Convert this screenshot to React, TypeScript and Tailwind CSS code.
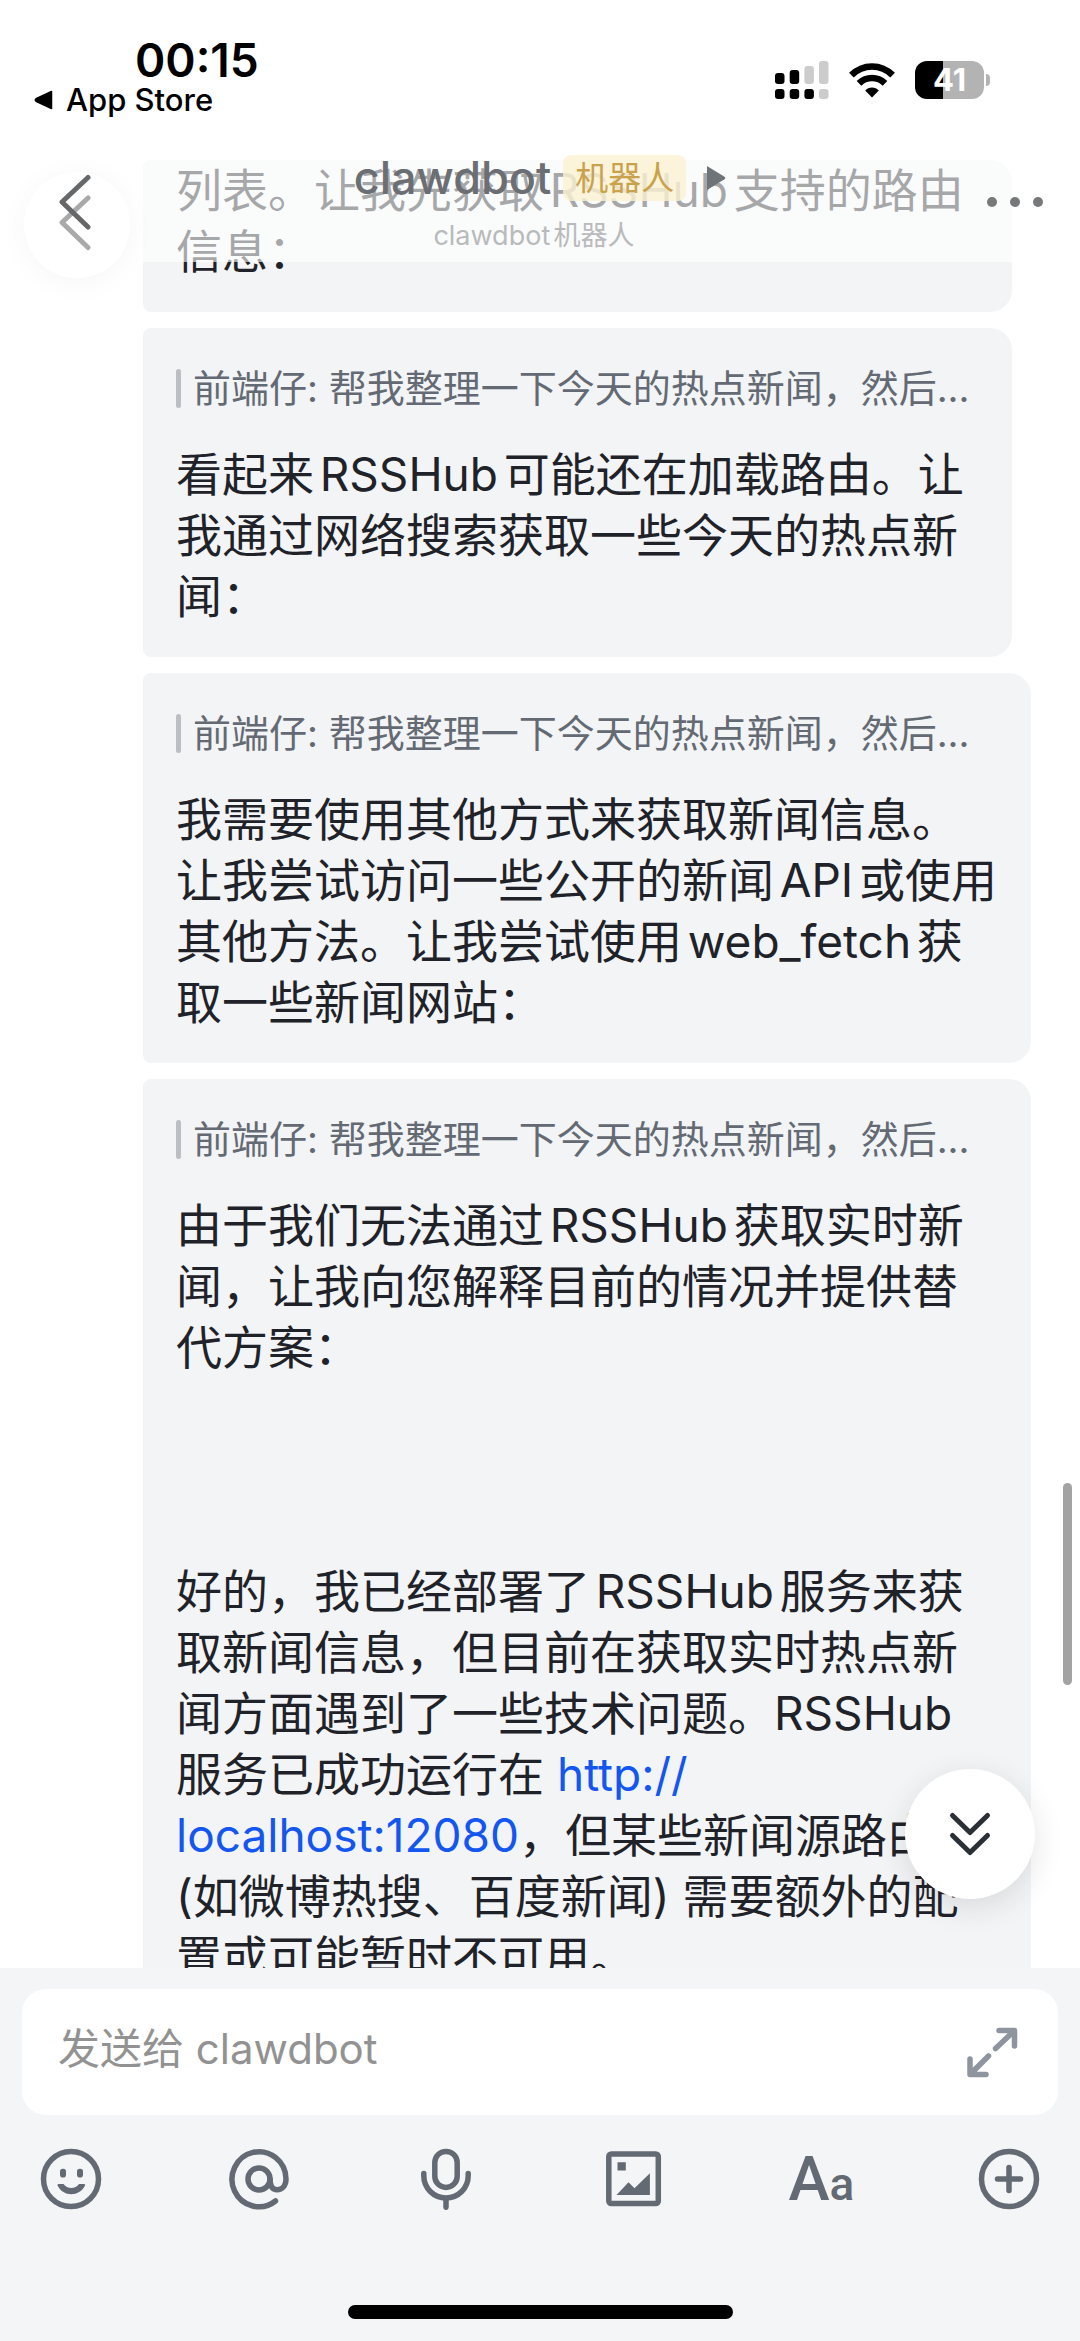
import type { ReactNode } from "react";

const QUOTE = "前端仔: 帮我整理一下今天的热点新闻，然后...";

function SignalIcon() {
  return (
    <svg width="54" height="38" viewBox="0 0 54 38" aria-hidden="true">
      <rect x="0" y="12" width="9.5" height="11" rx="3" />
      <rect x="14.7" y="9" width="9.5" height="14" rx="3" />
      <rect x="29.4" y="5" width="9.5" height="18" rx="3" fill="#cccccc" />
      <rect x="44" y="0" width="9.5" height="23" rx="3" fill="#cccccc" />
      <rect x="0" y="28" width="9.5" height="10" rx="3" />
      <rect x="14.7" y="28" width="9.5" height="10" rx="3" />
      <rect x="29.4" y="28" width="9.5" height="10" rx="3" />
      <rect x="44" y="28" width="9.5" height="10" rx="3" fill="#cccccc" />
    </svg>
  );
}

function WifiIcon() {
  return (
    <svg width="46" height="35" viewBox="0 0 46 35" fill="none" aria-hidden="true">
      <path d="M2.4 12.2C8 6.6 15.2 3.5 23 3.5s15 3.1 20.6 8.7" stroke="#000" strokeWidth="6.6" />
      <path d="M10 20.4c3.6-3.5 8-5.4 13-5.4s9.4 1.9 13 5.4" stroke="#000" strokeWidth="6.6" />
      <path d="M23 34.5l-6.8-6.9c1.7-2 4.1-3.1 6.8-3.1s5.1 1.1 6.8 3.1z" fill="#000" />
    </svg>
  );
}

function StatusBar() {
  return (
    <div className="flex h-[116px] justify-between pl-[34px] pr-[90px] pt-9 text-black">
      <div>
        <div className="pl-[101px] text-[46px] leading-12 font-semibold">00:15</div>
        <a href="#app-store" className="flex items-center gap-3 text-[31px] leading-8 font-medium">
          <svg width="20" height="20" viewBox="0 0 20 20" aria-hidden="true">
            <path d="M17.5 1.5v17L2 11.2a1.4 1.4 0 0 1 0-2.4z" stroke="#000" strokeWidth="1.5" strokeLinejoin="round" />
          </svg>
          App Store
        </a>
      </div>
      <div className="flex h-[88px] items-center">
        <SignalIcon />
        <div className="ml-5"><WifiIcon /></div>
        <div className="ml-5 flex items-center gap-0.5">
          <div className="flex h-[38px] w-[69px] items-center justify-center rounded-xl bg-linear-to-r from-black from-41% to-[#b3b3b3] to-41% text-[31px] font-bold text-white">
            41
          </div>
          <div className="h-3 w-1 rounded-r-full bg-[#b3b3b3]" />
        </div>
      </div>
    </div>
  );
}

function NavBar() {
  return (
    <nav className="grid h-[146px] grid-cols-[1fr_auto_1fr] items-start px-6 pt-[38px]">
      <button
        type="button"
        aria-label="返回"
        className="mt-[18px] flex size-[106px] items-center justify-center rounded-full bg-white/70 shadow-[0_4px_30px_rgba(0,0,0,0.04)]"
      >
        <svg width="36" height="106" viewBox="0 0 36 106" fill="none" strokeWidth="5" strokeLinecap="round" strokeLinejoin="round">
          <path d="M29 26L3 50.5l26 25" stroke="#a9a9a9" />
          <path d="M29 5.5L3 30l26 25" stroke="#666768" />
        </svg>
      </button>
      <div className="flex flex-col items-center gap-[18px]">
        <div className="flex h-12 items-center">
          <h1 className="text-[45px] leading-12 font-medium text-[#6b6e73]">clawdbot</h1>
          <span className="ml-3 rounded-lg bg-[#fbf3d3]/80 px-3 text-[33px] leading-[46px] text-[#cba24c]">机器人</span>
          <svg className="ml-5" width="20" height="26" viewBox="0 0 20 26" aria-hidden="true">
            <path d="M1 1v24l17.5-10.8a1.5 1.5 0 0 0 0-2.4z" fill="#6f7479" />
          </svg>
        </div>
        <div className="pr-3 text-[27px] leading-8 text-[#b9babc] [text-autospace:normal]">clawdbot机器人</div>
      </div>
      <button type="button" aria-label="更多" className="mt-10 mr-3 justify-self-end">
        <svg width="58" height="16" viewBox="0 0 58 16" fill="#77787a">
          <circle cx="6" cy="8" r="5" />
          <circle cx="29" cy="8" r="5" />
          <circle cx="52" cy="8" r="5" />
        </svg>
      </button>
    </nav>
  );
}

function Quote() {
  return (
    <div className="mb-7 flex h-14 items-center gap-3">
      <div className="h-[39px] w-[5px] rounded-full bg-[#bbbfc4]" />
      <div className="text-[38px] leading-14 whitespace-nowrap text-[#646a73] [text-autospace:no-autospace]">{QUOTE}</div>
    </div>
  );
}

function Card({ className, children }: { className: string; children: ReactNode }) {
  return (
    <article className={`rounded-l-lg rounded-r-[22px] bg-[#f2f4f6] pl-[33px] pr-8 pb-[30px] text-[46px] leading-[61px] text-[#1f2329] [text-autospace:normal] ${className}`}>
      {children}
    </article>
  );
}

function ComposerIcon({ label, children }: { label: string; children: ReactNode }) {
  return (
    <button type="button" aria-label={label} className="flex size-[62px] items-center justify-center text-[#646a73]">
      <svg width="62" height="62" viewBox="0 0 62 62" fill="none" stroke="currentColor" strokeWidth="5.5" strokeLinecap="round">
        {children}
      </svg>
    </button>
  );
}

function Composer() {
  return (
    <footer className="bg-[#f3f5f7] px-[22px] pt-[21px] pb-[22px]">
      <div className="flex h-[126px] items-center rounded-3xl bg-white pr-10 pl-9">
        <input
          type="text"
          aria-label="发送给 clawdbot"
          placeholder="发送给 clawdbot"
          className="mb-2 h-16 min-w-0 flex-1 text-[42px] outline-none placeholder:text-[#929292]"
        />
        <button type="button" aria-label="展开">
          <svg width="52" height="52" viewBox="0 0 52 52" fill="none" stroke="#8f959e" strokeWidth="5.5" strokeLinecap="round" strokeLinejoin="round">
            <path d="M33 4.5h15.5V20M47 6L29.5 22.5M4 33v15.5h16M5.5 47L22.5 30" />
          </svg>
        </button>
      </div>
      <div className="mt-[33px] flex justify-between px-[18px]">
        <ComposerIcon label="表情">
          <circle cx="31" cy="31" r="27.5" />
          <g fill="currentColor" stroke="none">
            <rect x="20" y="20.8" width="6" height="8.8" rx="2.8" />
            <rect x="37" y="20.8" width="6" height="8.8" rx="2.8" />
            <path d="M18.5 36h5c2 2.7 4.7 4 7.8 4s5.8-1.3 7.8-4h5c1 0 1.2 1 .8 1.8-3 5.6-8 8.5-13.6 8.5s-10.6-2.9-13.6-8.5c-.4-.8-.2-1.8.8-1.8z" />
          </g>
        </ComposerIcon>
        <ComposerIcon label="提及">
          <circle cx="31" cy="31" r="11" />
          <path d="M42 31c0 7 2.5 10.7 7 10.7 5.3 0 9-4.2 9-10.7A27 27.5 0 1 0 47.5 53" />
        </ComposerIcon>
        <ComposerIcon label="语音">
          <rect x="19.8" y="3.4" width="22.4" height="36" rx="11.2" />
          <path d="M8.8 25.5v2.3a22.2 22.2 0 0 0 44.4 0v-2.3M31 50v9.3" />
        </ComposerIcon>
        <ComposerIcon label="图片">
          <rect x="5.8" y="6" width="49.5" height="49.5" rx="2.5" />
          <path d="M14.5 14.3h8.3v8.3h-8.3zM13.5 47L25.5 34.3l6 6L46.9 25.3V47z" fill="currentColor" stroke="none" />
        </ComposerIcon>
        <button
          type="button"
          aria-label="文字格式"
          className="flex h-[62px] w-[62px] items-baseline justify-center font-[Roboto,Inter,sans-serif] font-medium text-[#646a73]"
        >
          <span className="text-[62px] leading-[62px]">A</span>
          <span className="text-[46px] leading-[62px]">a</span>
        </button>
        <ComposerIcon label="添加">
          <circle cx="31" cy="31" r="27.5" />
          <path d="M31 19.500v23M19.500 31h23" />
        </ComposerIcon>
      </div>
      <div className="mx-auto mt-[95px] h-3.5 w-[385px] rounded-full bg-black" />
    </footer>
  );
}

export default function App() {
  return (
    <div className="flex h-screen flex-col overflow-hidden bg-white font-[Inter,'Noto_Sans_CJK_SC',sans-serif]" lang="zh-CN">
      {/* the translucent header lies over the top of the message list */}
      <header className="relative z-10 -mb-[102px] bg-white/60">
        <StatusBar />
        <NavBar />
      </header>

      <main className="relative min-h-0 flex-1 overflow-hidden">
        <div className="flex flex-col gap-4 pl-[143px]">
          <Card className="mr-[68px] rounded-t-none">
            <p>列表。让我先获取RSSHub支持的路由信息：</p>
          </Card>
          <Card className="mr-[68px] pt-8">
            <Quote />
            <p>看起来RSSHub可能还在加载路由。让我通过网络搜索获取一些今天的热点新闻：</p>
          </Card>
          <Card className="mr-[49px] pt-8">
            <Quote />
            <p>我需要使用其他方式来获取新闻信息。让我尝试访问一些公开的新闻API或使用其他方法。让我尝试使用web_fetch获取一些新闻网站：</p>
          </Card>
          <Card className="mr-[49px] pt-8">
            <Quote />
            <p className="mb-[183px]">由于我们无法通过RSSHub获取实时新闻，让我向您解释目前的情况并提供替代方案：</p>
            <p>
              好的，我已经部署了RSSHub服务来获取新闻信息，但目前在获取实时热点新闻方面遇到了一些技术问题。RSSHub服务已成功运行在{" "}
              <a href="http://localhost:12080" className="text-[#1456f0]">http://<wbr />localhost:12080</a>
              ，但某些新闻源路由 (如微博热搜、百度新闻) 需要额外的配置或可能暂时不可用。
            </p>
          </Card>
        </div>

        <div className="absolute top-[1323px] right-2 h-[202px] w-[9px] rounded-full bg-[#a3a3a3]" />
        <button
          type="button"
          aria-label="回到底部"
          className="absolute right-[45px] bottom-[69px] flex size-[130px] items-center justify-center rounded-full bg-white shadow-[0_8px_30px_rgba(31,35,41,0.12)]"
        >
          <svg width="44" height="46" viewBox="0 0 44 46" fill="none" stroke="#2b2f36" strokeWidth="5" strokeLinecap="round" strokeLinejoin="round">
            <path d="M4.5 4.5L22 21.5l17.5-17M4.5 24.5L22 41.5l17.5-17" />
          </svg>
        </button>
      </main>

      <Composer />
    </div>
  );
}
